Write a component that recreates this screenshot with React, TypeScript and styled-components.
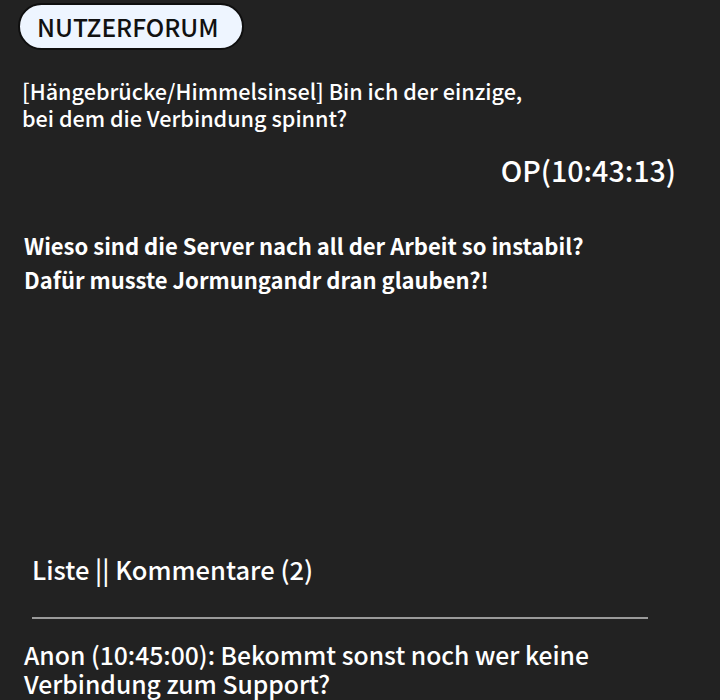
import styled, { createGlobalStyle } from "styled-components";

const GlobalStyle = createGlobalStyle`
  html, body {
    margin: 0;
    padding: 0;
    background: #222222;
  }
  body {
    font-family: "Noto Sans CJK JP", "Noto Sans", sans-serif;
    color: #ffffff;
  }
`;

const Page = styled.div`
  width: 720px;
  height: 700px;
  overflow: hidden;
  background: #222222;
  display: flex;
  flex-direction: column;
`;

const Badge = styled.div`
  align-self: flex-start;
  box-sizing: border-box;
  margin: 3px 0 0 18px;
  height: 47px;
  width: 226px;
  padding-left: 17px;
  display: flex;
  align-items: center;
  background: #eef5ff;
  border: 2px solid #0f0f0f;
  border-radius: 24px;
  color: #111111;
  font-size: 24.5px;
  font-weight: 500;
`;

const Title = styled.h1`
  margin: 27px 0 0 22px;
  font-size: 21.6px;
  line-height: 27px;
  font-weight: 500;
`;

const Author = styled.div`
  align-self: flex-end;
  margin: 22px 44px 0 0;
  font-size: 28.6px;
  line-height: 34px;
  font-weight: 500;
`;

const Body = styled.p`
  margin: 41px 0 0 24px;
  font-size: 22px;
  line-height: 34px;
  font-weight: 600;
`;

const Comments = styled.section`
  margin-top: 257px;
  display: flex;
  flex-direction: column;
`;

const Tabs = styled.div`
  margin-left: 32px;
  font-size: 25.5px;
  line-height: 32px;
  font-weight: 500;
`;

const Divider = styled.hr`
  margin: 32px 0 0 32px;
  width: 616px;
  border: none;
  height: 2px;
  background: #9a9a9a;
`;

const Comment = styled.p`
  margin: 21px 0 0 24px;
  font-size: 24.7px;
  line-height: 29px;
  font-weight: 500;
`;

export default function App() {
  return (
    <Page>
      <GlobalStyle />
      <Badge>NUTZERFORUM</Badge>
      <Title>
        [Hängebrücke/Himmelsinsel] Bin ich der einzige,
        <br />
        bei dem die Verbindung spinnt?
      </Title>
      <Author>OP(10:43:13)</Author>
      <Body>
        Wieso sind die Server nach all der Arbeit so instabil?
        <br />
        Dafür musste Jormungandr dran glauben?!
      </Body>
      <Comments>
        <Tabs>Liste || Kommentare (2)</Tabs>
        <Divider />
        <Comment>
          Anon (10:45:00): Bekommt sonst noch wer keine
          <br />
          Verbindung zum Support?
        </Comment>
      </Comments>
    </Page>
  );
}
